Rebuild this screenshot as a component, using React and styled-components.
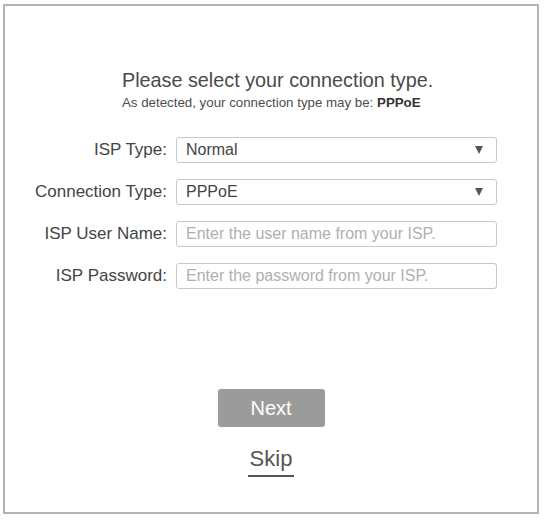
import React from "react";
import styled, { createGlobalStyle } from "styled-components";

const GlobalStyle = createGlobalStyle`
  body {
    margin: 0;
    background: #fff;
    font-family: "Liberation Sans", Arial, sans-serif;
  }
`;

const Frame = styled.div`
  box-sizing: border-box;
  width: 536px;
  height: 510px;
  margin: 4px 0 0 3px;
  border: 2px solid #b4b4b4;
  padding-top: 62px;
  display: flex;
  flex-direction: column;
`;

const Header = styled.div`
  padding-left: 117px;
  color: #4d4d4d;
`;

const Title = styled.h1`
  margin: 0;
  font-size: 19.8px;
  line-height: 24px;
  font-weight: 400;
  color: #4a4a4a;
`;

const Subtitle = styled.p`
  margin: 3px 0 0;
  font-size: 13.3px;
  line-height: 16px;

  b {
    font-weight: 700;
    color: #333;
  }
`;

const Form = styled.div`
  margin-top: 26px;
  display: grid;
  grid-template-columns: 162px 321px;
  column-gap: 9px;
  row-gap: 16px;
  align-items: center;
`;

const Label = styled.label`
  text-align: right;
  font-size: 17px;
  color: #444;
  white-space: nowrap;
`;

const Field = styled.div`
  box-sizing: border-box;
  position: relative;
  height: 26px;
  border: 1px solid #c8c8c8;
  border-radius: 3px;
  padding: 0 9px;
  display: flex;
  align-items: center;
  justify-content: space-between;
  font-size: 16px;
  color: ${(p) => (p.$placeholder ? "#b0b0b0" : "#444")};
`;

const Arrow = styled.span`
  width: 0;
  height: 0;
  border-left: 4.5px solid transparent;
  border-right: 4.5px solid transparent;
  border-top: 8px solid #555;
  margin-right: 4px;
`;

const Actions = styled.div`
  margin-top: 100px;
  display: flex;
  flex-direction: column;
  align-items: center;
`;

const NextButton = styled.button`
  width: 107px;
  height: 38px;
  border: none;
  border-radius: 3px;
  background: #9b9b9b;
  color: #fff;
  font-family: inherit;
  font-size: 20px;
  cursor: pointer;
`;

const Skip = styled.a`
  margin-top: 19px;
  padding: 0 2px 3px;
  font-size: 22px;
  line-height: 26px;
  color: #555;
  border-bottom: 2px solid #555;
  cursor: pointer;
`;

const rows = [
  { label: "ISP Type:", value: "Normal", select: true },
  { label: "Connection Type:", value: "PPPoE", select: true },
  { label: "ISP User Name:", value: "Enter the user name from your ISP.", placeholder: true },
  { label: "ISP Password:", value: "Enter the password from your ISP.", placeholder: true },
];

export default function App() {
  return (
    <>
      <GlobalStyle />
      <Frame>
        <Header>
          <Title>Please select your connection type.</Title>
          <Subtitle>
            As detected, your connection type may be: <b>PPPoE</b>
          </Subtitle>
        </Header>
        <Form>
          {rows.map((r) => (
            <React.Fragment key={r.label}>
              <Label>{r.label}</Label>
              <Field $placeholder={r.placeholder}>
                <span>{r.value}</span>
                {r.select && <Arrow />}
              </Field>
            </React.Fragment>
          ))}
        </Form>
        <Actions>
          <NextButton>Next</NextButton>
          <Skip>Skip</Skip>
        </Actions>
      </Frame>
    </>
  );
}
